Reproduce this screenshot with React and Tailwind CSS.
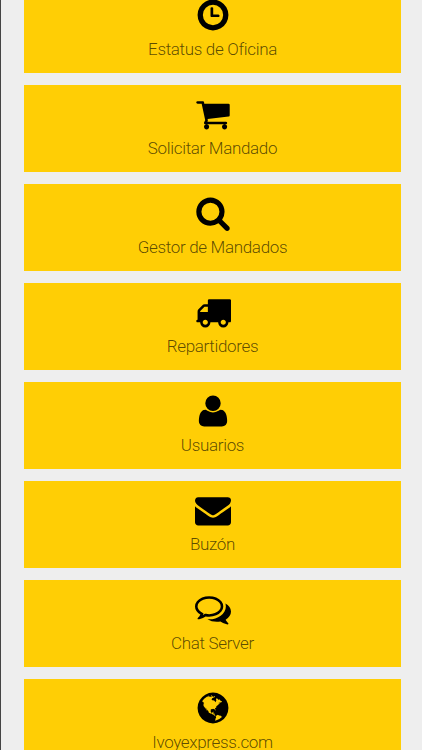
import React from 'react';

// Solid glyphs on a 1792 unit grid
const ICONS = {
  clock: 'M906 560v316h260q22 0 38 16t16 38v16q0 22-16 38t-38 16h-340q-22 0-38-16t-16-38v-386q0-22 16-38t38-16h26q22 0 38 16t16 38zm495 336a505 505 0 1 0-1010 0 505 505 0 1 0 1010 0zm263 0q0 209-103 385.5t-279.5 279.5-385.5 103-385.5-103-279.5-279.5-103-385.5 103-385.5 279.5-279.5 385.5-103 385.5 103 279.5 279.5 103 385.5z',
  cart: 'M704 1536q0 52-38 90t-90 38-90-38-38-90 38-90 90-38 90 38 38 90zm896 0q0 52-38 90t-90 38-90-38-38-90 38-90 90-38 90 38 38 90zm128-1088v512q0 24-16.5 42.5t-40.5 21.5l-1044 122q13 60 13 70 0 16-24 64h920q26 0 45 19t19 45-19 45-45 19h-1024q-26 0-45-19t-19-45q0-11 8-31.5t16-36 21.5-40 15.5-29.5l-177-823h-204q-26 0-45-19t-19-45 19-45 45-19h256q16 0 28.5 6.5t19.5 15.5 13 24.5 8 26 5.5 29.5 4.5 26h1201q26 0 45 19t19 45z',
  search: 'M1216 832q0-185-131.5-316.5t-316.5-131.5-316.5 131.5-131.5 316.5 131.5 316.5 316.5 131.5 316.5-131.5 131.5-316.5zm512 832q0 52-38 90t-90 38q-54 0-90-38l-343-342q-179 124-399 124-143 0-273.5-55.5t-225-150-150-225-55.5-273.5 55.5-273.5 150-225 225-150 273.5-55.5 273.5 55.5 225 150 150 225 55.5 273.5q0 220-124 399l343 343q37 37 37 90z',
  truck: 'M640 1408q0-52-38-90t-90-38-90 38-38 90 38 90 90 38 90-38 38-90zm-384-512h384v-256h-158q-13 0-22 9l-195 195q-9 9-9 22v30zm1280 512q0-52-38-90t-90-38-90 38-38 90 38 90 90 38 90-38 38-90zm256-1088v1024q0 15-4 26.5t-13.5 18.5-16.5 11.5-23.5 6-22.5 2-25.5 0-22.5-.5q0 106-75 181t-181 75-181-75-75-181h-384q0 106-75 181t-181 75-181-75-75-181h-64q-3 0-22.5.5t-25.5 0-22.5-2-23.5-6-16.5-11.5-13.5-18.5-4-26.5q0-26 19-45t45-19v-320q0-8-.5-35t0-38 2.5-34.5 6.5-37 14-30.5 22.5-30l198-198q19-19 50.5-32t58.5-13h160v-192q0-26 19-45t45-19h1024q26 0 45 19t19 45z',
  user: 'M1600 1405q0 120-73 189.5t-194 69.5h-874q-121 0-194-69.5t-73-189.5q0-53 3.5-103.5t14-109 26.5-108.5 43-97.5 62-81 85.5-53.5 111.5-20q9 0 42 21.5t74.5 48 108 48 133.5 21.5 133.5-21.5 108-48 74.5-48 42-21.5q61 0 111.5 20t85.5 53.5 62 81 43 97.5 26.5 108.5 14 109 3.5 103.5zm-320-893q0 159-112.5 271.5t-271.5 112.5-271.5-112.5-112.5-271.5 112.5-271.5 271.5-112.5 271.5 112.5 112.5 271.5z',
  envelope: 'M1792 710v794q0 66-47 113t-113 47h-1472q-66 0-113-47t-47-113v-794q44 49 101 87 362 246 497 345 57 42 92.5 65.5t94.5 48 110 24.5h2q51 0 110-24.5t94.5-48 92.5-65.5q170-123 498-345 57-39 100-87zm0-294q0 79-49 151t-122 123q-376 261-468 325-10 7-42.5 31t-54 38.5-52 32.5-57.5 27-50 9h-2q-23 0-50-9t-57.5-27-52-32.5-54-38.5-42.5-31q-91-64-262-182.5t-205-142.5q-62-42-117-115.5t-55-136.5q0-78 41.5-130t118.5-52h1472q65 0 112.5 47t47.5 113z',
  comments: 'M704 384q-153 0-286 52t-211.5 141-78.5 191q0 82 53 158t149 132l97 56-35 84q34-20 62-39l44-31 53 10q78 14 153 14 153 0 286-52t211.5-141 78.5-191-78.5-191-211.5-141-286-52zm0-128q191 0 353.5 68.5t256.5 186.5 94 257-94 257-256.5 186.5-353.5 68.5q-86 0-176-16-124 88-278 128-36 9-86 16h-3q-11 0-20.5-8t-11.5-21q-1-3-1-6.5t.5-6.5 2-6l2.5-5 3.5-5.5 4-5 4.5-5 4-4.5q5-6 23-25t26-29.5 22.5-29 25-38.5 20.5-44q-124-72-195-177t-71-224q0-139 94-257t256.5-186.5 353.5-68.5zm822 1169q10 24 20.5 44t25 38.5 22.5 29 26 29.5 23 25q1 1 4 4.5t4.5 5 4 5 3.5 5.5l2.5 5 2 6 .5 6.5-1 6.5q-3 14-13 22t-22 7q-50-7-86-16-154-40-278-128-90 16-176 16-271 0-472-132 58 4 88 4 161 0 309-45t264-129q125-92 192-212t67-254q0-77-23-152 129 71 204 178t75 230q0 120-71 224.5t-195 176.5z',
  globe: 'M896 128q209 0 385.5 103t279.5 279.5 103 385.5-103 385.5-279.5 279.5-385.5 103-385.5-103-279.5-279.5-103-385.5 103-385.5 279.5-279.5 385.5-103zm274 521q-2 1-9.5 9.5t-13.5 9.5q2 0 4.5-5t5-11 3.5-7q6-7 22-15 14-6 52-12 34-8 51 11-2-2 9.5-13t14.5-12q3-2 15-4.5t15-7.5l2-22q-12 1-17.5-7t-6.5-21q0 2-6 8 0-7-4.5-8t-11.5 1-9 1q-10-3-15-7.5t-8-16.5-4-15q-2-5-9.5-11t-9.5-10q-1-2-2.5-5.5t-3-6.5-4-5.5-5.5-2.5-7 5-7.5 10-4.5 5q-3-2-6-1.5t-4.5 1-4.5 3-5 3.5q-3 2-8.5 3t-8.5 2q15-5-1-11-10-4-16-3 9-4 7.5-12t-8.5-14h5q-1-4-8.5-8.5t-17.5-8.5-13-6q-8-5-34-9.5t-33-.5q-5 6-4.5 10.5t4 14 3.5 12.5q1 6-5.5 13t-6.5 12q0 7 14 15.5t10 21.5q-3 8-16 16t-16 12q-5 8-1.5 18.5t10.5 16.5q2 2 1.5 4t-3.5 4.5-5.5 4-6.5 3.5l-3 2q-11 5-20.5-6t-13.5-26q-7-25-16-30-23-8-29 1-5-13-41-26-25-9-58-4 6-1 0-15-7-15-19-12 3-6 4-17.5t1-13.5q3-13 12-23 1-1 7-8.5t9.5-13.5.5-6q35 4 50-11 5-5 11.5-17t10.5-17q9-6 14-5.5t14.5 5.5 14.5 5q14 1 15.5-11t-7.5-20q12 1 3-17-4-7-8-9-12-4-27 5-8 4 2 8-1-1-9.5 10.5t-16.5 17.5-16-5q-1-1-5.5-13.5t-9.5-13.5q-8 0-16 15 3-8-11-15t-24-8q19-12-8-27-7-4-20.5-5t-19.5 4q-5 7-5.5 11.5t5 8 10.5 5.5 11.5 4 8.5 3q14 10 8 14-2 1-8.5 3.5t-11.5 4.5-6 4q-3 4 0 14t-2 14q-5-5-9-17.5t-7-16.5q7 9-25 6l-10-1q-4 0-16 2t-20.5 1-13.5-8q-4-8 0-20 1-4 4-2-4-3-11-9.5t-10-8.5q-46 15-94 41 6 1 12-1 5-2 13-6.5t10-5.5q34-14 42-7l5-5q14 16 20 25-7-4-30-1-20 6-22 12 7 12 5 18-4-3-11.5-10t-14.5-11-15-5q-16 0-22 1-146 80-235 222 7 7 12 8 4 1 5 9t2.5 11 11.5-3q9 8 3 19 1-1 44 27 19 17 21 21 3 11-10 18-1-2-9-9t-9-4q-3 5 .5 18.5t10.5 12.5q-7 0-9.5 16t-2.5 35.5-1 23.5l2 1q-3 12 5.5 34.5t21.5 19.5q-13 3 20 43 6 8 8 9 3 2 12 7.5t15 10 10 10.5q4 5 10 22.5t14 23.5q-2 6 9.5 20t10.5 23q-1 0-2.5 1t-2.5 1q3 7 15.5 14t15.5 13q1 3 2 10t3 11 8 2q2-20-24-62-15-25-17-29-3-5-5.5-15.5t-4.5-14.5q2 0 6 1.5t8.5 3.5 7.5 4 2 3q-3 7 2 17.5t12 18.5 17 19 12 13q6 6 14 19.5t0 13.5q9 0 20 10.5t17 19.5q5 8 8 26t5 24q2 7 8.5 13.5t12.5 9.5l16 8 13 7q5 2 18.5 10.5t21.5 11.5q10 4 16 4t14.5-2.5 13.5-3.5q15-2 29 15t21 21q36 19 55 11-2 1 .5 7.5t8 15.5 9 14.5 5.5 8.5q5 6 18 15t18 15q6-4 7-9-3 8 7 20t18 10q14-3 14-32-31 15-49-18 0-1-2.5-5.5t-4-8.5-2.5-8.5 0-7.5 5-3q9 0 10-3.5t-2-12.5-4-13q-1-8-11-20t-12-15q-5 9-16 8t-16-9q0 1-1.5 5.5t-1.5 6.5q-13 0-15-1 1-3 2.5-17.5t3.5-22.5q1-4 5.5-12t7.5-14.5 4-12.5-4.5-9.5-17.5-2.5q-19 1-26 20-1 3-3 10.5t-5 11.5-9 7q-7 3-24 2t-24-5q-13-8-22.5-29t-9.5-37q0-10 2.5-26.5t3-25-5.5-24.5q3-2 9-9.5t10-10.5q2-1 4.5-1.5t4.5 0 4-1.5 3-6q-1-1-4-3-3-3-4-3 7 3 28.5-1.5t27.5 1.5q15 11 22-2 0-1-2.5-9.5t-.5-13.5q5 27 29 9 3 3 15.5 5t17.5 5q3 2 7 5.5t5.5 4.5 5-.5 8.5-6.5q10 14 12 24 11 40 19 44 7 3 11 2t4.5-9.5 0-14-1.5-12.5l-1-8v-18l-1-8q-15-3-18.5-12t1.5-18.5 15-18.5q1-1 8-3.5t15.5-6.5 12.5-8q21-19 15-35 7 0 11-9-1 0-5-3t-7.5-5-4.5-2q9-5 2-16 5-3 7.5-11t7.5-10q9 12 21 2 8-8 1-16 5-7 20.5-10.5t18.5-9.5q7 2 8-2t1-12 3-12q4-5 15-9t13-5l17-11q3-4 0-4 18 2 31-11 10-11-6-20 3-6-3-9.5t-15-5.5q3-1 11.5-.5t10.5-1.5q15-10-7-16-17-5-43 12zm-163 877q206-36 351-189-3-3-12.5-4.5t-12.5-3.5q-18-7-24-8 1-7-2.5-13t-8-9-12.5-8-11-7q-2-2-7-6t-7-5.5-7.5-4.5-8.5-2-10 1l-3 1q-3 1-5.5 2.5t-5.5 3-4 3 0 2.5q-21-17-36-22-5-1-11-5.5t-10.5-7-10-1.5-11.5 7q-5 5-6 15t-2 13q-7-5 0-17.5t2-18.5q-3-6-10.5-4.5t-12 4.5-11.5 8.5-9 6.5-8.5 5.5-8.5 7.5q-3 4-6 12t-5 11q-2-4-11.5-6.5t-9.5-5.5q2 10 4 35t5 38q7 31-12 48-27 25-29 40-4 22 12 26 0 7-8 20.5t-7 21.5q0 6 2 16z',
};

const MENU_ITEMS = [
  { label: 'Estatus de Oficina', icon: 'clock' },
  { label: 'Solicitar Mandado', icon: 'cart' },
  { label: 'Gestor de Mandados', icon: 'search' },
  { label: 'Repartidores', icon: 'truck' },
  { label: 'Usuarios', icon: 'user' },
  { label: 'Buzón', icon: 'envelope' },
  { label: 'Chat Server', icon: 'comments' },
  { label: 'Ivoyexpress.com', icon: 'globe' },
];

function MenuButton({ label, icon }) {
  return (
    <button className="flex h-[87px] shrink-0 flex-col items-center bg-[#ffce05] pt-[11px] text-black">
      <svg viewBox="0 0 1792 1792" className="h-9 w-9 shrink-0" fill="currentColor" fillRule="evenodd" aria-hidden="true">
        <path d={ICONS[icon]} />
      </svg>
      <span className="mt-1 text-[17px] leading-6 font-light tracking-[-0.33px] text-black/65">{label}</span>
    </button>
  );
}

export default function App() {
  return (
    <div className="h-[750px] overflow-hidden bg-[#eeeeee] border-l border-[#444444] pl-[23px] pr-[21px] font-['Roboto',sans-serif]">
      <div className="flex flex-col gap-3 -mt-[14px]">
        {MENU_ITEMS.map(item => <MenuButton key={item.label} {...item} />)}
      </div>
    </div>
  );
}
